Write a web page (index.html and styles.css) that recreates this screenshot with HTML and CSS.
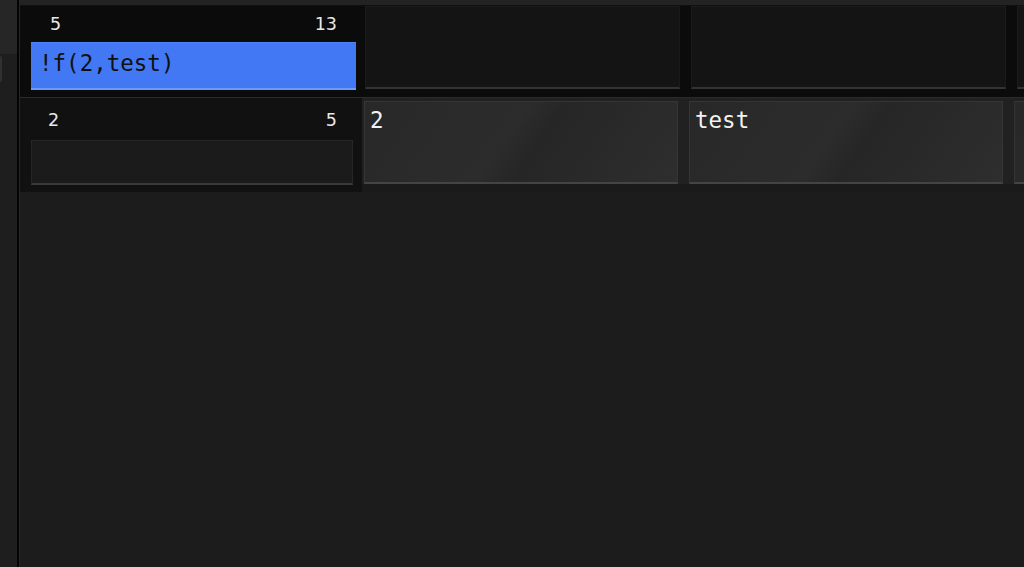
FILE: index.html
```html
<!DOCTYPE html>
<html>
<head>
<meta charset="utf-8">
<link rel="stylesheet" href="styles.css">
</head>
<body>
<div class="app">
  <aside class="sidebar">
    <div class="side-top"></div>
    <div class="side-tab"></div>
  </aside>
  <main class="main">
    <div class="topstrip"></div>
    <section class="row row-1">
      <div class="first">
        <div class="nums"><span>5</span><span>13</span></div>
        <div class="input-blue">!f(2,test)</div>
      </div>
      <div class="cells">
        <div class="cell dark"></div>
        <div class="cell dark"></div>
        <div class="cell dark"></div>
      </div>
    </section>
    <section class="row row-2">
      <div class="first">
        <div class="nums"><span>2</span><span>5</span></div>
        <div class="input-empty"></div>
      </div>
      <div class="cells">
        <div class="cell light">2</div>
        <div class="cell light">test</div>
        <div class="cell light"></div>
      </div>
    </section>
  </main>
</div>
</body>
</html>
```

FILE: styles.css
```css
html, body {
  margin: 0;
  padding: 0;
  height: 100%;
  background: #1c1c1c;
  overflow: hidden;
}

.app {
  display: flex;
  height: 567px;
  overflow: hidden;
}

.sidebar {
  width: 17px;
  flex: none;
  background: #1e1e1e;
  border-right: 2px solid #040404;
  display: flex;
  flex-direction: column;
}

.side-top {
  height: 54px;
  background: #262626;
}

.side-tab {
  margin-top: 2px;
  width: 2px;
  height: 26px;
  background: #303030;
  border-radius: 0 2px 2px 0;
}

.main {
  flex: 1;
  display: flex;
  flex-direction: column;
  border-left: 1px solid #262626;
  min-width: 0;
  overflow: hidden;
}

.topstrip {
  height: 5px;
  background: #232323;
  border-bottom: 1px solid #101010;
}

.row {
  display: flex;
  font-family: "DejaVu Sans Mono", "Liberation Mono", monospace;
  overflow: hidden;
}

.row-1 {
  height: 91px;
  background: #0b0b0b;
}

.row-2 {
  height: 94px;
  border-top: 1px solid #2b2b2b;
  background: linear-gradient(180deg, #212121 0, #212121 86px, #1a1a1a 86px);
}

.first {
  width: 341px;
  flex: none;
  box-sizing: border-box;
  padding: 0 5px 0 11px;
  display: flex;
  flex-direction: column;
}

.row-2 .first {
  width: 342px;
  background: #111111;
  padding: 0 9px 0 11px;
}

.nums {
  display: flex;
  justify-content: space-between;
  font-family: "DejaVu Sans", "Liberation Sans", sans-serif;
  font-size: 17.5px;
  color: #e8e8e8;
  align-items: center;
}

.row-1 .nums {
  height: 36px;
  padding: 0 19px 0 19px;
}

.row-2 .nums {
  height: 42px;
  padding: 2px 16px 0 17px;
  box-sizing: border-box;
}

.input-blue {
  height: 48px;
  background: #4378f4;
  border-bottom: 2px solid #6c9bff;
  box-sizing: border-box;
  border-top: 1px solid #4f82f7;
  color: #101010;
  font-size: 22.5px;
  line-height: 40px;
  padding-left: 8px;
}

.input-empty {
  height: 45px;
  box-sizing: border-box;
  background: #1b1b1b;
  border: 1px solid #262626;
  border-bottom: 2px solid #3a3a3a;
}

.cells {
  flex: 1;
  display: flex;
  gap: 11px;
  padding-left: 4px;
  min-width: 0;
}

.row-2 .cells {
  padding-left: 2px;
  padding-top: 3px;
}

.cell {
  width: 315px;
  flex: none;
  box-sizing: border-box;
}

.cell.dark {
  height: 83px;
  background: #141414;
  border: 1px solid #1b1b1b;
  border-bottom: 2px solid #333333;
}

.cell.light {
  width: 314px;
  height: 83px;
  background: linear-gradient(125deg, #282828 0%, #2c2c2c 45%, #262626 55%, #2e2e2e 100%);
  border: 1px solid #353535;
  border-bottom: 2px solid #444444;
  color: #f2f2f2;
  font-size: 22.5px;
  line-height: 36px;
  padding-left: 5px;
}
```
